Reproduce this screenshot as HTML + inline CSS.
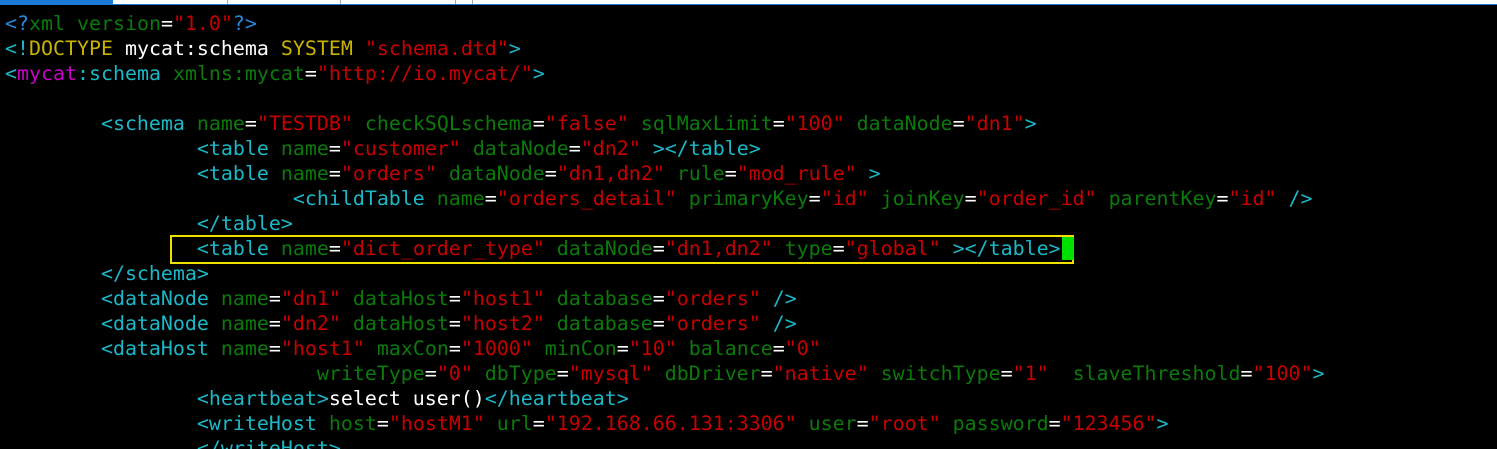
<!DOCTYPE html>
<html><head><meta charset="utf-8"><style>
html,body{margin:0;padding:0;background:#000;width:1497px;height:449px;overflow:hidden;position:relative}
.top{position:absolute;left:0;top:0;width:1497px;height:4px;background:#fff}
.top i{position:absolute;top:0;width:1px;height:4px;background:#aaa}
.tab{position:absolute;left:0;top:0;width:113px;height:5px;background:#1a7ad8}
.line{position:absolute;left:0;top:4px;width:1497px;height:1px;background:#1a7ad8}
pre{position:absolute;left:5px;top:11px;margin:0;font-family:"DejaVu Sans Mono","Liberation Mono",monospace;font-size:19.93px;line-height:25px;color:#fff}
.t{color:#1cb8c8}.a{color:#0b7a0b}.v{color:#c80000}.y{color:#c8b400}.m{color:#c800c8}.b{color:#2a86e0}
.box{position:absolute;left:170px;top:235px;width:900px;height:25px;border:2px solid #f0e000}
.cur{position:absolute;left:1062px;top:237px;width:12px;height:23px;background:#00e000}
</style></head><body>
<div class="top"><i style="left:227px"></i><i style="left:340px"></i><i style="left:455px"></i><i style="left:472px"></i></div>
<div class="line"></div><div class="tab"></div>
<div class="box"></div><div class="cur"></div>
<pre><span class="b">&lt;?</span><span class="a">xml version</span>=<span class="v">"1.0"</span><span class="b">?&gt;</span>
<span class="t">&lt;!</span><span class="y">DOCTYPE</span> mycat:schema <span class="y">SYSTEM</span> <span class="v">"schema.dtd"</span><span class="t">&gt;</span>
<span class="t">&lt;</span><span class="m">mycat</span><span class="t">:schema</span> <span class="a">xmlns:mycat</span>=<span class="v">"http://io.mycat/"</span><span class="t">&gt;</span>

        <span class="t">&lt;schema</span> <span class="a">name</span>=<span class="v">"TESTDB"</span> <span class="a">checkSQLschema</span>=<span class="v">"false"</span> <span class="a">sqlMaxLimit</span>=<span class="v">"100"</span> <span class="a">dataNode</span>=<span class="v">"dn1"</span><span class="t">&gt;</span>
                <span class="t">&lt;table</span> <span class="a">name</span>=<span class="v">"customer"</span> <span class="a">dataNode</span>=<span class="v">"dn2"</span> <span class="t">&gt;&lt;/table&gt;</span>
                <span class="t">&lt;table</span> <span class="a">name</span>=<span class="v">"orders"</span> <span class="a">dataNode</span>=<span class="v">"dn1,dn2"</span> <span class="a">rule</span>=<span class="v">"mod_rule"</span> <span class="t">&gt;</span>
                        <span class="t">&lt;childTable</span> <span class="a">name</span>=<span class="v">"orders_detail"</span> <span class="a">primaryKey</span>=<span class="v">"id"</span> <span class="a">joinKey</span>=<span class="v">"order_id"</span> <span class="a">parentKey</span>=<span class="v">"id"</span> <span class="t">/&gt;</span>
                <span class="t">&lt;/table&gt;</span>
                <span class="t">&lt;table</span> <span class="a">name</span>=<span class="v">"dict_order_type"</span> <span class="a">dataNode</span>=<span class="v">"dn1,dn2"</span> <span class="a">type</span>=<span class="v">"global"</span> <span class="t">&gt;&lt;/table&gt;</span>
        <span class="t">&lt;/schema&gt;</span>
        <span class="t">&lt;dataNode</span> <span class="a">name</span>=<span class="v">"dn1"</span> <span class="a">dataHost</span>=<span class="v">"host1"</span> <span class="a">database</span>=<span class="v">"orders"</span> <span class="t">/&gt;</span>
        <span class="t">&lt;dataNode</span> <span class="a">name</span>=<span class="v">"dn2"</span> <span class="a">dataHost</span>=<span class="v">"host2"</span> <span class="a">database</span>=<span class="v">"orders"</span> <span class="t">/&gt;</span>
        <span class="t">&lt;dataHost</span> <span class="a">name</span>=<span class="v">"host1"</span> <span class="a">maxCon</span>=<span class="v">"1000"</span> <span class="a">minCon</span>=<span class="v">"10"</span> <span class="a">balance</span>=<span class="v">"0"</span>
                          <span class="a">writeType</span>=<span class="v">"0"</span> <span class="a">dbType</span>=<span class="v">"mysql"</span> <span class="a">dbDriver</span>=<span class="v">"native"</span> <span class="a">switchType</span>=<span class="v">"1"</span>  <span class="a">slaveThreshold</span>=<span class="v">"100"</span><span class="t">&gt;</span>
                <span class="t">&lt;heartbeat&gt;</span>select user()<span class="t">&lt;/heartbeat&gt;</span>
                <span class="t">&lt;writeHost</span> <span class="a">host</span>=<span class="v">"hostM1"</span> <span class="a">url</span>=<span class="v">"192.168.66.131:3306"</span> <span class="a">user</span>=<span class="v">"root"</span> <span class="a">password</span>=<span class="v">"123456"</span><span class="t">&gt;</span>
                <span class="t">&lt;/writeHost&gt;</span></pre>
</body></html>
